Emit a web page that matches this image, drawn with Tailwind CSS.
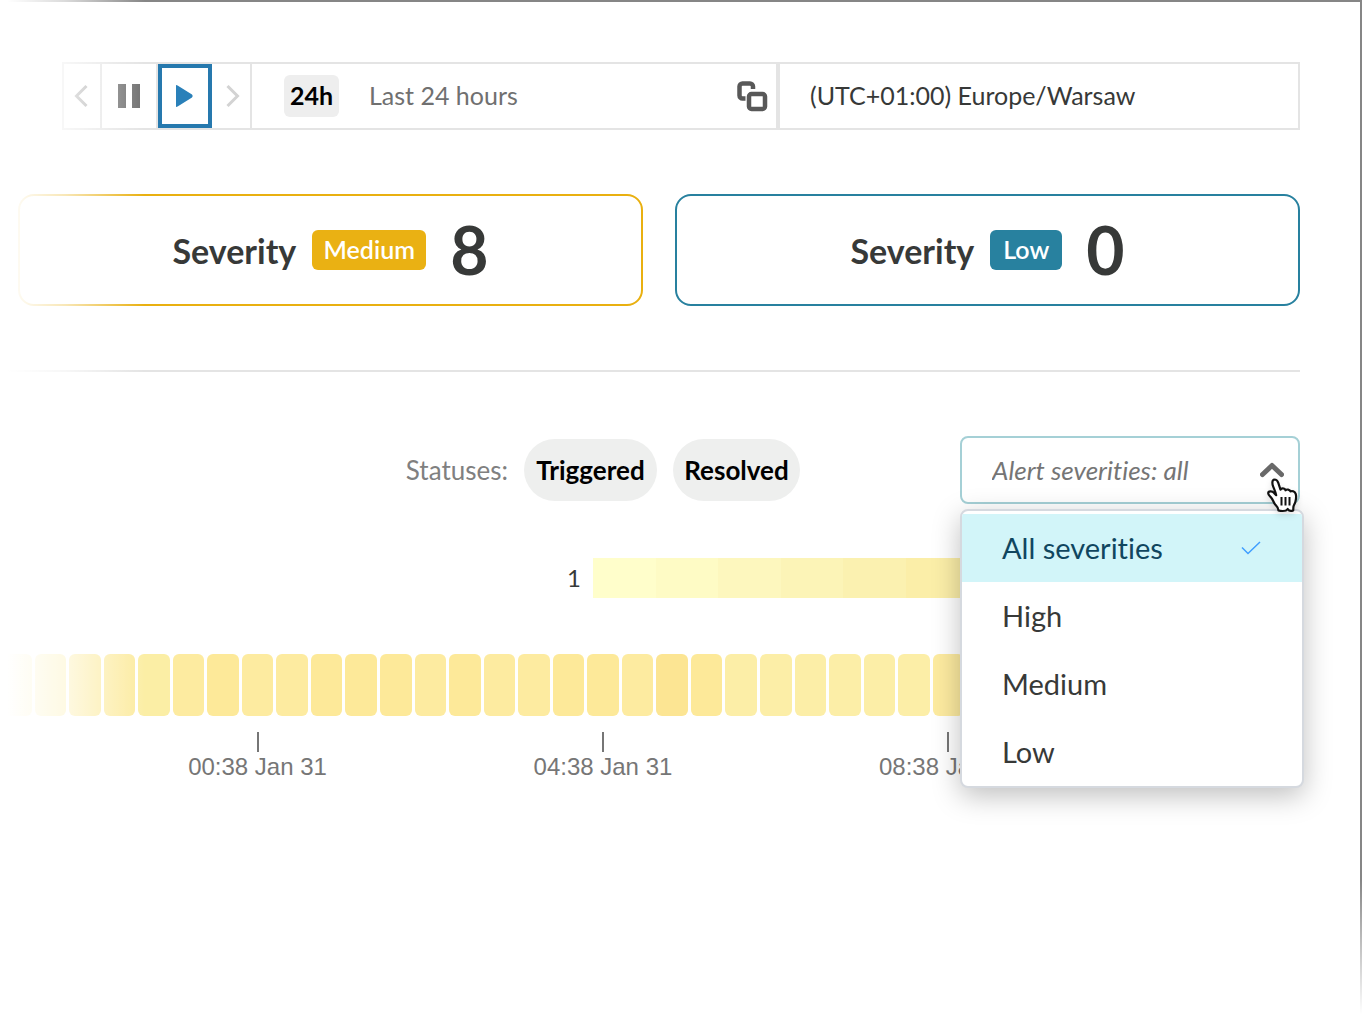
<!DOCTYPE html>
<html lang="en">
<head>
<meta charset="utf-8">
<meta name="viewport" content="width=device-width, initial-scale=1">
<title>Alerts</title>
<script src="https://cdn.jsdelivr.net/npm/@tailwindcss/browser@4"></script>
</head>
<body class="bg-white">
<div class="relative overflow-hidden">
<main class="min-h-screen border-t-2 border-r-2 border-[#868686] bg-white pt-[60px] pr-[60px] font-[Lato,sans-serif] text-[#373938] [font-variant-ligatures:none]">

  <!-- Time range toolbar -->
  <div class="ml-[62px] flex h-[68px] border-2 border-[#e4e4e4] text-[25px]">
    <button type="button" aria-label="Previous" class="flex w-[38px] items-center justify-center border-r-2 border-[#e4e4e4] pr-0.5">
      <svg width="14" height="24" viewBox="0 0 14 24" fill="none" stroke="#aaaaaa" stroke-width="3"><path d="M12.500 2 2.500 12l10 10"/></svg>
    </button>
    <button type="button" aria-label="Pause" class="flex w-14 items-center justify-center border-r-2 border-[#e4e4e4]">
      <svg width="22" height="24" viewBox="0 0 22 24" fill="#707070"><path d="M0 0h8v24H0zM14 0h8v24h-8z"/></svg>
    </button>
    <button type="button" aria-label="Play" class="flex w-[54px] items-center justify-center border-4 border-[#2679ae]">
      <svg width="20" height="22" viewBox="0 0 20 22" fill="#2a80b9"><path d="M1 0q1 0 2 .7L17 9.500q1.500 1.500 0 3L3 21.300q-1 .7-2 .7z"/></svg>
    </button>
    <button type="button" aria-label="Next" class="flex w-10 items-center justify-center border-r-2 border-[#e4e4e4] pl-1">
      <svg width="14" height="24" viewBox="0 0 14 24" fill="none" stroke="#d3d3d3" stroke-width="3"><path d="m1.500 2 10 10-10 10"/></svg>
    </button>
    <button type="button" class="flex flex-1 items-center pr-2 pl-8 text-left text-[#707070]">
      <span class="flex h-[42px] w-[55px] items-center justify-center rounded-md bg-[#eee] font-bold text-black">24h</span>
      <span class="ml-[30px] flex-1">Last 24 hours</span>
      <svg width="32" height="32" viewBox="0 0 32 32" fill="none" stroke="#585858" stroke-width="4.500"><path d="M9.500 18.500H6.500a3 3 0 0 1-3-3V6.500a3 3 0 0 1 3-3H14a3 3 0 0 1 3 3V9"/><rect x="13" y="14" width="16" height="15" rx="2.500"/></svg>
    </button>
    <select aria-label="Time zone" class="w-[522px] appearance-none border-l-4 border-[#e4e4e4] bg-white pl-[30px]">
      <option>(UTC+01:00) Europe/Warsaw</option>
    </select>
  </div>

  <!-- Alert counts -->
  <div class="mt-16 ml-[18px] flex gap-8">
    <section class="flex h-28 flex-1 items-center justify-center rounded-2xl border-2 border-[#e9b010]">
      <h2 class="text-[34px] font-bold">Severity</h2>
      <span class="ml-4 flex h-10 w-[114px] items-center justify-center rounded-md bg-[#eab113] text-[25px] font-semibold text-white">Medium</span>
      <strong class="ml-6 text-[66px] leading-none">8</strong>
    </section>
    <section class="flex h-28 flex-1 items-center justify-center rounded-2xl border-2 border-[#28819f]">
      <h2 class="text-[34px] font-bold">Severity</h2>
      <span class="ml-4 flex h-10 w-[72px] items-center justify-center rounded-md bg-[#28819f] text-[25px] font-semibold text-white">Low</span>
      <strong class="ml-6 text-[66px] leading-none">0</strong>
    </section>
  </div>

  <hr class="mt-16 border-t-2 border-[#e4e4e4]">

  <!-- Filters -->
  <div class="mt-16 flex items-center justify-end text-[26px]">
    <span class="mr-4 text-[#808080]">Statuses:</span>
    <button type="button" class="mr-4 h-[62px] w-[133px] rounded-full bg-[#eeefee] font-bold text-black">Triggered</button>
    <button type="button" class="mr-40 h-[62px] w-[127px] rounded-full bg-[#eeefee] font-bold text-black">Resolved</button>
    <div class="relative z-20 w-[340px]">
      <select aria-label="Alert severities" class="block h-[68px] w-full appearance-none rounded-lg border-2 border-[#a5d0d6] bg-white pl-[30px] text-[#757575] italic">
        <option>Alert severities: all</option>
      </select>
      <svg class="pointer-events-none absolute top-[25px] right-4" width="24" height="18" viewBox="0 0 24 18" fill="none" stroke="#696969" stroke-width="5" stroke-linecap="round" stroke-linejoin="round"><path d="M2.500 13.500 12 4.500l9.500 9"/></svg>
      <ul role="listbox" aria-label="Severity" class="absolute top-[73px] -right-1 left-0 overflow-hidden rounded-lg border-2 border-[#d5d9df] bg-white pt-[3px] text-[29px] shadow-[0_8px_28px_rgba(0,0,0,0.25)]">
        <li role="option" aria-selected="true" class="flex h-17 items-center justify-between bg-[#d2f5f9] pr-[41px] pl-10 text-[#10465f]">All severities
          <svg width="20" height="14" viewBox="0 0 20 14" fill="none" stroke="#409eff" stroke-width="1.500"><path d="m1 6.500 6 6L19 1"/></svg>
        </li>
        <li role="option" aria-selected="false" class="flex h-17 items-center pl-10">High</li>
        <li role="option" aria-selected="false" class="flex h-17 items-center pl-10">Medium</li>
        <li role="option" aria-selected="false" class="flex h-17 items-center pl-10">Low</li>
      </ul>
      <!-- Pointer -->
      <svg class="pointer-events-none absolute top-[41px] right-px drop-shadow-md" width="34" height="38" viewBox="0 0 34 38"><path d="M9.500 2.500c2 0 3 1.200 3.700 3.200l2.300 7c.3-1.600 4.400-1.900 5 .6 1-1.300 4.400-1 5 1.200 1.300-1 4.300-.2 5.200 2.300.8 2.500.4 5.200-.3 8-.5 2-1.800 3.500-2 5.200l-.2 3.500c-1.800.7-4.200.6-5.500-1.500-1.300 2-2.300 2-5 2-2 0-3.500-.3-4.300-.6.2-2.500-1.500-4-3.200-5.800-1.700-2-2-4.500-3.700-6.600-1.500-2-3.300-3-3.300-4.700 0-2.300 3.800-2.800 6-.2l2 2c-.6-3-1.800-5.500-3-8.500-.8-2-1.800-6.800 1.300-7.100z" fill="#fff" stroke="#111" stroke-width="2.200" stroke-linejoin="round"/><path d="M16.500 20v8.500M20.500 20v8.500M24.500 20v8.500" stroke="#111" stroke-width="2"/></svg>
    </div>
  </div>

  <!-- Colour scale -->
  <div class="mt-[54px] flex items-center justify-end pr-[82px] text-2xl">
    <span class="mr-3">1</span>
    <div class="flex h-10 w-[625px] *:flex-1">
      <i class="bg-[#fffecb]"></i><i class="bg-[#fefbc5]"></i><i class="bg-[#fdf7be]"></i><i class="bg-[#fcf4b7]"></i><i class="bg-[#fbf1b0]"></i><i class="bg-[#fbeea8]"></i><i class="bg-[#faeba0]"></i><i class="bg-[#fae898]"></i><i class="bg-[#f9e590]"></i><i class="bg-[#f9e288]"></i>
    </div>
  </div>

  <!-- Timeline -->
  <div class="mt-14 mr-[25px]">
    <div class="flex h-[62px] gap-[3px] *:flex-1 *:rounded-md">
      <i class="bg-[#fceea5]"></i><i class="bg-[#fceea5]"></i><i class="bg-[#fceba0]"></i><i class="bg-[#fceba0]"></i><i class="bg-[#fbeea5]"></i><i class="bg-[#fdeba0]"></i><i class="bg-[#fde999]"></i><i class="bg-[#fdeba0]"></i><i class="bg-[#fdeba0]"></i><i class="bg-[#fde999]"></i><i class="bg-[#fde999]"></i><i class="bg-[#fde999]"></i><i class="bg-[#fdeba0]"></i><i class="bg-[#fde999]"></i><i class="bg-[#fdeba0]"></i><i class="bg-[#fdeba0]"></i><i class="bg-[#fde999]"></i><i class="bg-[#fde999]"></i><i class="bg-[#fdeba0]"></i><i class="bg-[#fce593]"></i><i class="bg-[#fde999]"></i><i class="bg-[#fceea7]"></i><i class="bg-[#fceea7]"></i><i class="bg-[#fceea7]"></i><i class="bg-[#fceea7]"></i><i class="bg-[#fceea7]"></i><i class="bg-[#fceea7]"></i><i class="bg-[#fdeba0]"></i><i class="bg-[#fdeba0]"></i><i class="bg-[#fdeba0]"></i><i class="bg-[#fdeba0]"></i><i class="bg-[#fdeba0]"></i><i class="bg-[#fdeba0]"></i><i class="bg-[#fdeba0]"></i><i class="bg-[#fdeba0]"></i><i class="bg-[#fdeba0]"></i><i class="bg-[#fdeba0]"></i>
    </div>
    <div class="mt-4 grid grid-cols-37 gap-[3px] font-['Liberation_Sans',sans-serif] text-2xl text-[#767676]">
      <div class="col-span-9 col-start-4 flex flex-col items-center"><span class="h-5 w-0.5 bg-[#767676]"></span><time class="leading-[30px]">00:38 Jan 31</time></div>
      <div class="col-span-9 col-start-14 flex flex-col items-center"><span class="h-5 w-0.5 bg-[#767676]"></span><time class="leading-[30px]">04:38 Jan 31</time></div>
      <div class="col-span-9 col-start-24 flex flex-col items-center"><span class="h-5 w-0.5 bg-[#767676]"></span><time class="leading-[30px]">08:38 Jan 31</time></div>
    </div>
  </div>
</main>

<!-- Edge fades, drawn over the frame as well -->
<div class="pointer-events-none absolute inset-y-0 left-0 z-10 w-[145px] bg-linear-to-r from-white from-5% via-white/70 via-45% to-transparent"></div>
<div class="pointer-events-none absolute inset-x-0 bottom-0 z-10 h-[146px] bg-linear-to-t from-white from-8% to-transparent"></div>
</div>
</body>
</html>
